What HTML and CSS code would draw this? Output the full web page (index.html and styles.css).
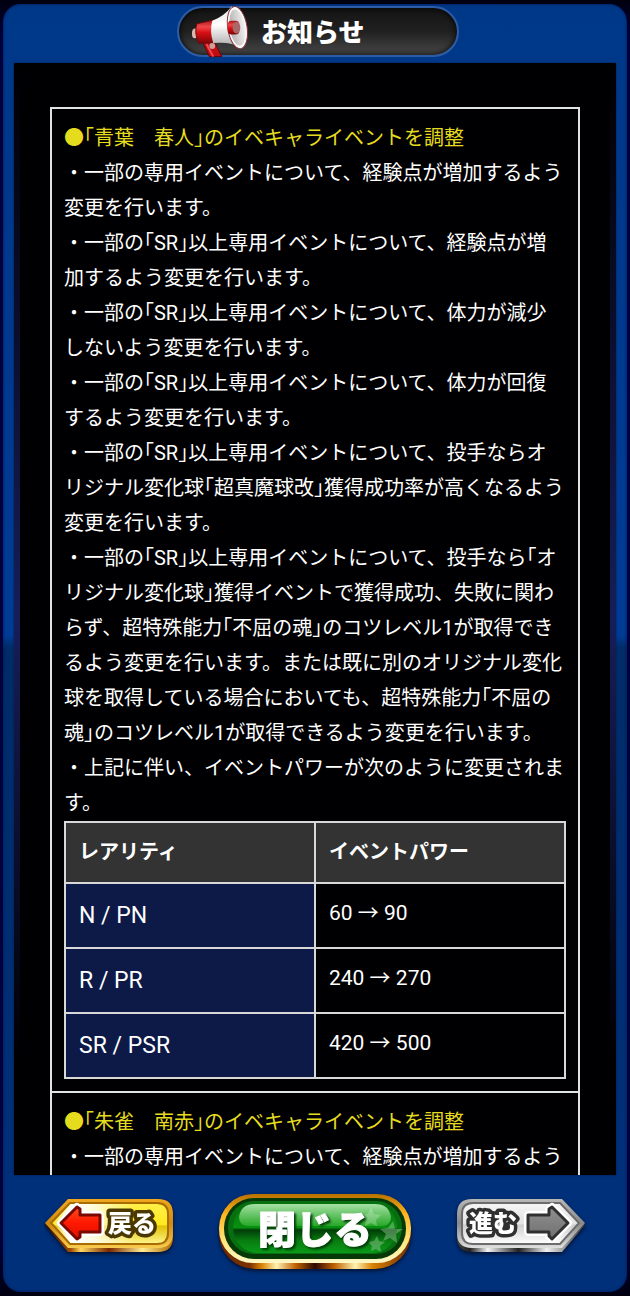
FILE: index.html
```html
<!DOCTYPE html>
<html lang="ja">
<head>
    <meta charset="UTF-8">
    <meta name="viewport" content="width=device-width, initial-scale=1.0">
    <title>お知らせ</title>
    <link rel="stylesheet" href="styles.css">
</head>
<body>
    <div class="frame">
        <header class="header">
            <div class="title">
                <svg class="megaphone" viewBox="0 0 60 54" aria-hidden="true">
                    <defs>
                        <linearGradient id="red" x1="0" y1="0" x2="0" y2="1">
                            <stop offset="0" stop-color="#a81418"/>
                            <stop offset=".3" stop-color="#f0484a"/>
                            <stop offset=".55" stop-color="#d80f14"/>
                            <stop offset="1" stop-color="#7c0508"/>
                        </linearGradient>
                        <linearGradient id="horn" x1="0" y1="0" x2="0" y2="1">
                            <stop offset="0" stop-color="#e8e4e4"/>
                            <stop offset=".45" stop-color="#ffffff"/>
                            <stop offset="1" stop-color="#a8a4a6"/>
                        </linearGradient>
                        <linearGradient id="bell" x1="0" y1="0" x2="1" y2="0">
                            <stop offset="0" stop-color="#b4b0b2"/>
                            <stop offset="1" stop-color="#f2f0f0"/>
                        </linearGradient>
                    </defs>
                    <path d="M12 38 L24 37 L32 53 H19 Z" fill="#c00c12" stroke="#5a0508"/>
                    <path d="M16 40 L23 53" fill="none" stroke="#f04a4c" stroke-width="2"/>
                    <ellipse cx="4" cy="29" rx="3" ry="5" fill="#d9b8b0"/>
                    <path d="M6 19 L24 15 Q20 27 23 39 L8 39 Q3 29 6 19 Z" fill="url(#red)" stroke="#6e0a0c"/>
                    <circle cx="22" cy="42" r="3" fill="#c9a09c"/>
                    <path d="M22 16 Q35 11 42 1 L53 44 Q40 37 23 39 Q19 27 22 16 Z" fill="url(#horn)"/>
                    <ellipse cx="48" cy="23" rx="10" ry="22" fill="#fafafa" stroke="#8a3036" transform="rotate(-9 48 23)"/>
                    <ellipse cx="48" cy="23" rx="8" ry="19" fill="url(#bell)" transform="rotate(-9 48 23)"/>
                    <rect x="38" y="16" width="12" height="14" rx="4" fill="url(#red)"/>
                    <ellipse cx="47" cy="23" rx="4" ry="6" fill="#a8686a"/>
                </svg>
                <h1>お知らせ</h1>
            </div>
        </header>

        <main class="panel">
            <section class="notice">
                <h2>●｢青葉　春人｣のイベキャライベントを調整</h2>
                <p>・一部の専用イベントについて、経験点が増加するよう変更を行います。</p>
                <p>・一部の｢SR｣以上専用イベントについて、経験点が増加するよう変更を行います。</p>
                <p>・一部の｢SR｣以上専用イベントについて、体力が減少しないよう変更を行います。</p>
                <p>・一部の｢SR｣以上専用イベントについて、体力が回復するよう変更を行います。</p>
                <p>・一部の｢SR｣以上専用イベントについて、投手ならオリジナル変化球｢超真魔球改｣獲得成功率が高くなるよう変更を行います。</p>
                <p>・一部の｢SR｣以上専用イベントについて、投手なら｢オリジナル変化球｣獲得イベントで獲得成功、失敗に関わらず、超特殊能力｢不屈の魂｣のコツレベル1が取得できるよう変更を行います。または既に別のオリジナル変化球を取得している場合においても、超特殊能力｢不屈の魂｣のコツレベル1が取得できるよう変更を行います。</p>
                <p>・上記に伴い、イベントパワーが次のように変更されます。</p>
                <table>
                    <thead>
                        <tr>
                            <th scope="col">レアリティ</th>
                            <th scope="col">イベントパワー</th>
                        </tr>
                    </thead>
                    <tbody>
                        <tr>
                            <th scope="row">N / PN</th>
                            <td>60 → 90</td>
                        </tr>
                        <tr>
                            <th scope="row">R / PR</th>
                            <td>240 → 270</td>
                        </tr>
                        <tr>
                            <th scope="row">SR / PSR</th>
                            <td>420 → 500</td>
                        </tr>
                    </tbody>
                </table>
            </section>
            <section class="notice">
                <h2>●｢朱雀　南赤｣のイベキャライベントを調整</h2>
                <p>・一部の専用イベントについて、経験点が増加するよう</p>
            </section>
        </main>

        <footer class="footer">
            <button type="button" class="btn btn-back">
                <svg viewBox="0 0 130 56">
                    <defs>
                        <linearGradient id="gold" x1="0" y1="0" x2="0" y2="1">
                            <stop offset="0" stop-color="#f0a820"/>
                            <stop offset=".5" stop-color="#d08a10"/>
                            <stop offset="1" stop-color="#f8cc50"/>
                        </linearGradient>
                        <linearGradient id="goldEdge" x1="0" y1="0" x2="1" y2="0">
                            <stop offset="0" stop-color="#2c1000"/>
                            <stop offset=".2" stop-color="#a04c00"/>
                            <stop offset=".28" stop-color="#ffd860"/>
                            <stop offset=".5" stop-color="#7a2800"/>
                            <stop offset=".76" stop-color="#ffec90"/>
                            <stop offset="1" stop-color="#b06a00"/>
                        </linearGradient>
                        <linearGradient id="yellow" x1="0" y1="0" x2="0" y2="1">
                            <stop offset="0" stop-color="#fff04a"/>
                            <stop offset=".53" stop-color="#ffe820"/>
                            <stop offset=".56" stop-color="#dfc200"/>
                            <stop offset="1" stop-color="#fff690"/>
                        </linearGradient>
                        <linearGradient id="glow" x1="0" y1="0" x2="1" y2="0">
                            <stop offset="0" stop-color="#fff" stop-opacity="0"/>
                            <stop offset=".2" stop-color="#fff"/>
                            <stop offset=".5" stop-color="#fff" stop-opacity=".8"/>
                            <stop offset="1" stop-color="#fff" stop-opacity="0"/>
                        </linearGradient>
                        <linearGradient id="arrowRed" x1="0" y1="0" x2="0" y2="1">
                            <stop offset="0" stop-color="#ff5020"/>
                            <stop offset=".5" stop-color="#ff1800"/>
                            <stop offset="1" stop-color="#e01000"/>
                        </linearGradient>
                    </defs>
                    <path d="M1 27 L24 4 H114 Q129 4 129 19 V39 Q129 54 114 54 H24 Z" fill="url(#goldEdge)"/>
                    <path d="M1 25 L24 1 H114 Q129 1 129 16 V35 Q129 50 114 50 H24 Z" fill="url(#gold)"/>
                    <path d="M7 25 L26 5 H113 Q124 5 124 16 V35 Q124 46 113 46 H26 Z" fill="url(#yellow)" stroke="#a86c00" stroke-width="2"/>
                    <path d="M9 25 L27 6 H90 V45 H27 Z" fill="url(#glow)"/>
                    <path d="M17 25 L33 9 L36 11 V17 H56 V34 H36 V39 L33 41 Z" fill="none" stroke="#fff" stroke-width="8" stroke-linejoin="round"/>
                    <path d="M17 25 L33 9 L36 11 V17 H56 V34 H36 V39 L33 41 Z" fill="url(#arrowRed)" stroke="#780800" stroke-width="3" stroke-linejoin="round"/>
                    <text class="label label-gold" x="88" y="34">戻る</text>
                </svg>
            </button>
            <button type="button" class="btn btn-close">
                <svg viewBox="0 0 192 78">
                    <defs>
                        <linearGradient id="rimEdge" x1="0" y1="0" x2="1" y2="0">
                            <stop offset="0" stop-color="#6a2a00"/>
                            <stop offset=".16" stop-color="#7c3000"/>
                            <stop offset=".22" stop-color="#d88000"/>
                            <stop offset=".3" stop-color="#fff2b0"/>
                            <stop offset=".4" stop-color="#c06000"/>
                            <stop offset=".5" stop-color="#2c0800"/>
                            <stop offset=".6" stop-color="#c06000"/>
                            <stop offset=".71" stop-color="#fff2b0"/>
                            <stop offset=".8" stop-color="#d88000"/>
                            <stop offset="1" stop-color="#6a2a00"/>
                        </linearGradient>
                        <linearGradient id="rim" x1="0" y1="0" x2="0" y2="1">
                            <stop offset="0" stop-color="#b87000"/>
                            <stop offset=".3" stop-color="#ffb820"/>
                            <stop offset=".7" stop-color="#ffe880"/>
                            <stop offset="1" stop-color="#fff8c8"/>
                        </linearGradient>
                        <linearGradient id="green" x1="0" y1="0" x2="0" y2="1">
                            <stop offset="0" stop-color="#087010"/>
                            <stop offset=".49" stop-color="#089010"/>
                            <stop offset=".54" stop-color="#003c08"/>
                            <stop offset=".75" stop-color="#087c10"/>
                            <stop offset="1" stop-color="#0a9a18"/>
                        </linearGradient>
                        <linearGradient id="shine" x1="0" y1="0" x2="0" y2="1">
                            <stop offset="0" stop-color="#a4e0a4"/>
                            <stop offset="1" stop-color="#28a828"/>
                        </linearGradient>
                    </defs>
                    <rect x="0" y="5" width="192" height="71" rx="36" fill="url(#rimEdge)"/>
                    <rect x="0" y="1" width="192" height="69" rx="34" fill="url(#rim)"/>
                    <rect x="5" y="5" width="182" height="61" rx="30" fill="#063808"/>
                    <rect x="9" y="8" width="174" height="53" rx="26" fill="#067010"/>
                    <rect x="14" y="10" width="164" height="50" rx="25" fill="url(#green)"/>
                    <path d="M20 24 Q22 11 36 11 H156 Q170 11 172 24 Q172 33 162 33 H30 Q20 33 20 24 Z" fill="url(#shine)"/>
                    <path d="M174 28 L176 36 L184 36 L177 41 L178 50 L171 45 L164 48 L167 41 L161 36 L169 35 Z M158 43 L160 48 L166 49 L161 53 L162 59 L157 56 L152 58 L153 53 L149 49 L155 48 Z" fill="#9cc89c" opacity=".45"/>
                    <path d="M152 14 L155 21 L162 22 L157 27 L158 33 L152 30 L146 33 L147 27 L142 22 L149 21 Z" fill="#d8f0d8" opacity=".3"/>
                    <text class="label label-close" x="96" y="50">閉じる</text>
                </svg>
            </button>
            <button type="button" class="btn btn-next">
                <svg viewBox="0 0 130 56">
                    <defs>
                        <linearGradient id="silver" x1="0" y1="0" x2="0" y2="1">
                            <stop offset="0" stop-color="#b8b8b8"/>
                            <stop offset=".5" stop-color="#8a8a8a"/>
                            <stop offset="1" stop-color="#e0e0e0"/>
                        </linearGradient>
                        <linearGradient id="silverEdge" x1="0" y1="0" x2="1" y2="0">
                            <stop offset="0" stop-color="#444"/>
                            <stop offset=".1" stop-color="#222"/>
                            <stop offset=".24" stop-color="#f4f4f4"/>
                            <stop offset=".48" stop-color="#222"/>
                            <stop offset=".7" stop-color="#f0f0f0"/>
                            <stop offset="1" stop-color="#333"/>
                        </linearGradient>
                        <linearGradient id="white" x1="0" y1="0" x2="0" y2="1">
                            <stop offset="0" stop-color="#f4f4f4"/>
                            <stop offset=".5" stop-color="#e4e4e4"/>
                            <stop offset=".54" stop-color="#cfcfcf"/>
                            <stop offset="1" stop-color="#fff"/>
                        </linearGradient>
                        <linearGradient id="arrowGray" x1="0" y1="0" x2="0" y2="1">
                            <stop offset="0" stop-color="#909090"/>
                            <stop offset="1" stop-color="#707070"/>
                        </linearGradient>
                    </defs>
                    <path d="M129 27 L106 4 H16 Q1 4 1 19 V39 Q1 54 16 54 H106 Z" fill="url(#silverEdge)"/>
                    <path d="M129 25 L106 1 H16 Q1 1 1 16 V35 Q1 50 16 50 H106 Z" fill="url(#silver)"/>
                    <path d="M123 25 L104 5 H17 Q6 5 6 16 V35 Q6 46 17 46 H104 Z" fill="url(#white)" stroke="#6c6c6c" stroke-width="2"/>
                    <path d="M112 25 L96 9 L93 11 V17 H72 V34 H93 V38 L96 41 Z" fill="none" stroke="#fff" stroke-width="8" stroke-linejoin="round"/>
                    <path d="M112 25 L96 9 L93 11 V17 H72 V34 H93 V38 L96 41 Z" fill="url(#arrowGray)" stroke="#303030" stroke-width="3" stroke-linejoin="round"/>
                    <text class="label label-silver" x="37" y="34">進む</text>
                </svg>
            </button>
        </footer>
    </div>
</body>
</html>
```

FILE: styles.css
```css
* {
    box-sizing: border-box;
}

body {
    margin: 0;
    height: 100vh;
    padding: 4px 3px;
    background: linear-gradient(#000010, #00003c 40px, #00003c 1240px, #000010);
    font-family: Roboto, "Noto Sans CJK JP", sans-serif;
    color: #fff;
}

h1, h2, p {
    margin: 0;
}

.frame {
    display: flex;
    flex-direction: column;
    height: 100%;
    border-radius: 18px;
    background: linear-gradient(#003888, #003c96 49%, #002c68 50%, #00307a 90%);
    box-shadow: inset 0 0 3px #001450;
}

.header {
    display: flex;
    justify-content: center;
    padding: 2px 0 6px 6px;
}

.title {
    display: flex;
    align-items: center;
    gap: 12px;
    width: 282px;
    height: 51px;
    padding-left: 12px;
    border: 2px solid #2c5ca6;
    border-radius: 26px;
    background: linear-gradient(#141414, #202020 50%, #484848);
    box-shadow: inset 0 0 6px #000;
}

.title h1 {
    padding-top: 3px;
    font-size: 26px;
    font-weight: 900;
    line-height: 35px;
}

.megaphone {
    width: 58px;
    height: 53px;
}

.panel {
    flex: 1;
    min-height: 0;
    margin: 0 11px;
    padding: 44px 36px 0;
    background:
        linear-gradient(#000002, #161e5a 50%, #000002 90%) left / 6px 100% no-repeat,
        linear-gradient(#000002, #161e5a 50%, #000002 90%) right / 6px 100% no-repeat,
        #000002;
    box-shadow: 0 0 2px #001c50;
    overflow: hidden;
}

.notice {
    padding: 12px;
    border: 2px solid #dfe3e1;
    font-size: 20px;
    line-height: 35px;
    line-break: strict;
}

.notice + .notice {
    border-top: 0;
}

.notice h2 {
    font-size: 20px;
    font-weight: 400;
    color: #e6dc1e;
}

table {
    width: 100%;
    table-layout: fixed;
    border-collapse: collapse;
}

th, td {
    padding: 12px 13px;
    border: 2px solid #d8d8d8;
    text-align: left;
    vertical-align: top;
}

thead th {
    background: #333;
    font-weight: 700;
}

tbody th {
    background: #0d1a47;
    font-size: 23px;
    font-weight: 400;
    line-height: 39px;
}

tbody td {
    font-size: 21px;
}

.footer {
    display: flex;
    justify-content: space-between;
    align-items: flex-start;
    padding: 18px 41px 21px;
}

.btn {
    padding: 0;
    border: 0;
    background: none;
    cursor: pointer;
    filter: drop-shadow(0 2px 2px #001030);
}

.btn svg {
    display: block;
    width: 100%;
}

.btn-back,
.btn-next {
    width: 130px;
    margin-top: 5px;
}

.btn-close {
    width: 192px;
}

.label {
    fill: #fff;
    font-family: "Noto Sans CJK JP", sans-serif;
    font-size: 24px;
    font-weight: 900;
    text-anchor: middle;
    stroke-width: 7px;
    stroke-linejoin: round;
    paint-order: stroke;
}

.label-gold {
    stroke: #4a3800;
}

.label-silver {
    stroke: #303030;
}

.label-close {
    font-size: 38px;
    stroke: #fff;
    stroke-width: 1px;
    filter: drop-shadow(2px 2px 1px #003c08);
}
```
